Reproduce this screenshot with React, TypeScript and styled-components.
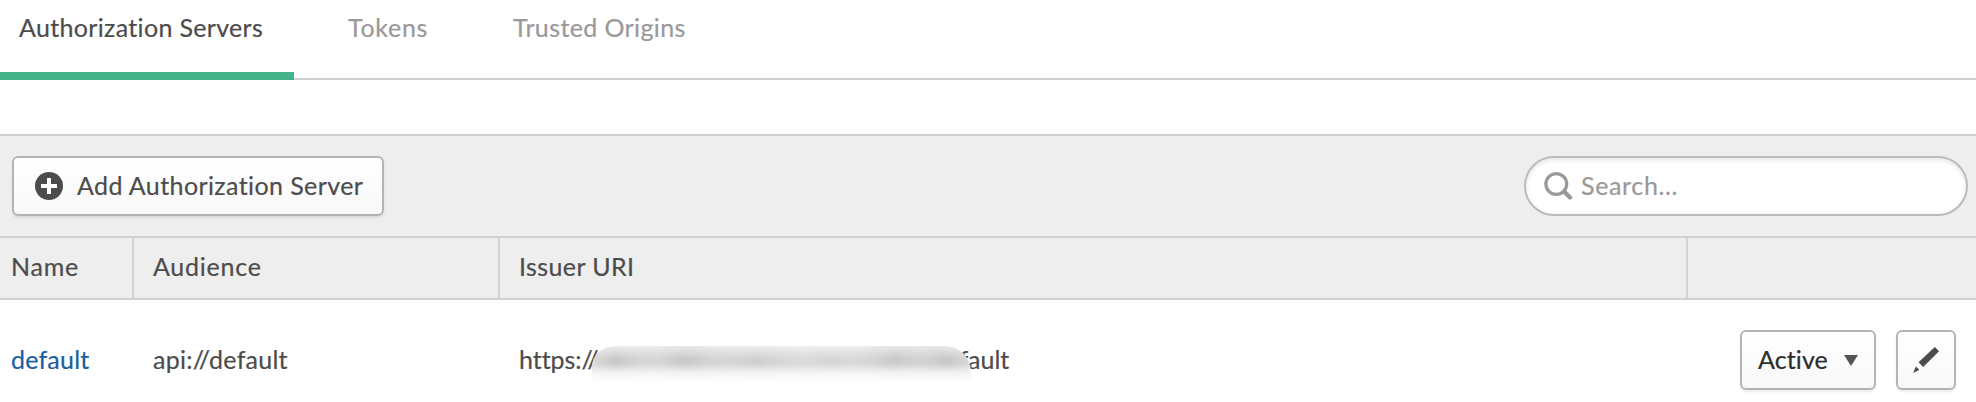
import React from 'react';
import styled, { createGlobalStyle } from 'styled-components';

const GlobalStyle = createGlobalStyle`
  * { box-sizing: border-box; }
  body {
    margin: 0;
    background: #fff;
    color: #4c4c4c;
    font: 25px/30px Lato, 'Liberation Sans', sans-serif;
    font-variant-ligatures: none;
    -webkit-text-stroke: 0.2px currentColor;
    overflow: hidden;
  }
`;

const Page = styled.main`
  display: flex;
  flex-direction: column;
  height: 402px;
`;

const Text = styled.span<{ $spacing?: number }>`
  letter-spacing: ${p => p.$spacing ?? 0}px;
  white-space: nowrap;
`;

const Tabs = styled.nav`
  display: flex;
  height: 80px;
  border-bottom: 2px solid #d0d0d0;
  margin-bottom: 54px;
`;

const Tab = styled.a<{ $active?: boolean; $width: number }>`
  width: ${p => p.$width}px;
  height: 80px;
  padding: 12px 0 0 19px;
  color: ${p => (p.$active ? '#4c4c4c' : '#999')};
  border-bottom: ${p => (p.$active ? '8px solid #46b38b' : '0')};
`;

const Toolbar = styled.header`
  display: flex;
  align-items: center;
  justify-content: space-between;
  height: 104px;
  padding: 0 8px 0 12px;
  background: #eee;
  border: solid #d0d0d0;
  border-width: 2px 0;
`;

const Button = styled.button<{ $width: number }>`
  display: flex;
  align-items: center;
  width: ${p => p.$width}px;
  height: 60px;
  padding: 0 0 0 21px;
  border: 2px solid #b4b4b4;
  border-radius: 6px;
  background: linear-gradient(#fff, #f8f8f8);
  box-shadow: 0 2px 2px rgba(0, 0, 0, 0.08);
  color: #4c4c4c;
  font: inherit;

  ${Text} { padding-bottom: 3px; }
`;

const AddButton = styled(Button)`
  gap: 14px;
`;

const StatusButton = styled(Button)`
  gap: 16px;
  padding-left: 16px;
  color: #2c2c2c;
`;

const EditButton = styled(Button)`
  justify-content: center;
  padding: 0;
`;

const SearchBox = styled.label`
  display: flex;
  align-items: center;
  gap: 8px;
  width: 444px;
  height: 60px;
  padding-left: 18px;
  border: 2px solid #bbb;
  border-radius: 30px;
  background: #fff;
  box-shadow: inset 0 2px 4px rgba(0, 0, 0, 0.1);
  color: #999;

  ${Text} { padding-bottom: 3px; }
`;

const Row = styled.div`
  display: grid;
  grid-template-columns: 134px 366px 1188px 288px;
`;

const HeaderRow = styled(Row)`
  height: 62px;
  background: #eee;
  border-bottom: 2px solid #d0d0d0;
`;

const HeaderCell = styled.div<{ $inset: number }>`
  display: flex;
  align-items: center;
  padding: 0 0 4px ${p => p.$inset}px;
  border-right: 2px solid #d4d4d4;

  &:last-child { border-right: 0; }
`;

const BodyRow = styled(Row)`
  height: 102px;
`;

const Cell = styled.div<{ $inset: number }>`
  display: flex;
  align-items: flex-start;
  padding: 44px 0 0 ${p => p.$inset}px;
`;

const ServerLink = styled.a`
  color: #1a5fa0;
`;

const Actions = styled.div`
  display: flex;
  justify-content: flex-end;
  gap: 20px;
  padding: 30px 20px 0 0;
`;

const Redaction = styled.span`
  flex: none;
  width: 379px;
  height: 40px;
  margin: 2px -12px 0 -6px;
  z-index: 1;
  border-radius: 24px 26px 6px 6px / 20px 26px 6px 6px;
  background:
    linear-gradient(rgba(255, 255, 255, 0.4), rgba(255, 255, 255, 0) 30%, rgba(255, 255, 255, 0) 45%, rgba(255, 255, 255, 0.65) 68%, #fff 92%),
    radial-gradient(ellipse 44px 24px at 24px 15px, rgba(196, 196, 196, 0.9), transparent),
    radial-gradient(ellipse 66px 26px at 94px 14px, rgba(196, 196, 196, 0.9), transparent),
    radial-gradient(ellipse 52px 24px at 166px 15px, rgba(200, 200, 200, 0.85), transparent),
    radial-gradient(ellipse 70px 24px at 240px 15px, rgba(204, 204, 204, 0.75), transparent),
    radial-gradient(ellipse 46px 26px at 304px 13px, rgba(196, 196, 196, 0.9), transparent),
    radial-gradient(ellipse 44px 27px at 354px 14px, rgba(194, 194, 194, 0.9), transparent),
    #ebebeb;
`;

const PlusIcon = () => (
  <svg width="28" height="28" viewBox="0 0 28 28">
    <circle cx="14" cy="14" r="14" fill="#4c4c4c" />
    <path d="M14 6v16M6 14h16" stroke="#fff" strokeWidth="4" />
  </svg>
);

const SearchIcon = () => (
  <svg width="29" height="28" viewBox="0 0 29 28" fill="none" stroke="#999">
    <circle cx="12.3" cy="12" r="10.4" strokeWidth="3.2" />
    <path d="M20 19.5l6 6" strokeWidth="4.4" strokeLinecap="round" />
  </svg>
);

const CaretIcon = () => (
  <svg width="14" height="11" viewBox="0 0 14 11">
    <path d="M0 0h14L7 11z" fill="#555" />
  </svg>
);

const PencilIcon = () => (
  <svg width="28" height="28" viewBox="0 0 28 28" fill="#4c4c4c">
    <path d="M22.800 1l4.200 4.200L11.200 21l-4.700-4.700z" />
    <path d="M3.800 20.500l3.600 3.300-6.200 3.200z" />
  </svg>
);

export default function App() {
  return (
    <Page>
      <GlobalStyle />
      <Tabs>
        <Tab $active $width={294}><Text $spacing={0.33}>Authorization Servers</Text></Tab>
        <Tab $width={35} />
        <Tab $width={165}><Text $spacing={0.7}>Tokens</Text></Tab>
        <Tab $width={200}><Text $spacing={0.38}>Trusted Origins</Text></Tab>
      </Tabs>
      <Toolbar>
        <AddButton type="button" $width={372}>
          <PlusIcon />
          <Text $spacing={0.4}>Add Authorization Server</Text>
        </AddButton>
        <SearchBox>
          <SearchIcon />
          <Text $spacing={0.65}>Search...</Text>
        </SearchBox>
      </Toolbar>
      <HeaderRow>
        <HeaderCell $inset={11}><Text $spacing={0.8}>Name</Text></HeaderCell>
        <HeaderCell $inset={19}><Text $spacing={0.75}>Audience</Text></HeaderCell>
        <HeaderCell $inset={19}><Text $spacing={0.4}>Issuer URI</Text></HeaderCell>
        <HeaderCell $inset={0} />
      </HeaderRow>
      <BodyRow>
        <Cell $inset={11}><ServerLink><Text $spacing={0.2}>default</Text></ServerLink></Cell>
        <Cell $inset={19}><Text $spacing={0.25}>api://default</Text></Cell>
        <Cell $inset={19}>
          <Text $spacing={-0.05}>https://</Text>
          <Redaction />
          <Text $spacing={0}>fault</Text>
        </Cell>
        <Actions>
          <StatusButton type="button" $width={136}>
            <Text $spacing={0.1}>Active</Text>
            <CaretIcon />
          </StatusButton>
          <EditButton type="button" $width={60}><PencilIcon /></EditButton>
        </Actions>
      </BodyRow>
    </Page>
  );
}
